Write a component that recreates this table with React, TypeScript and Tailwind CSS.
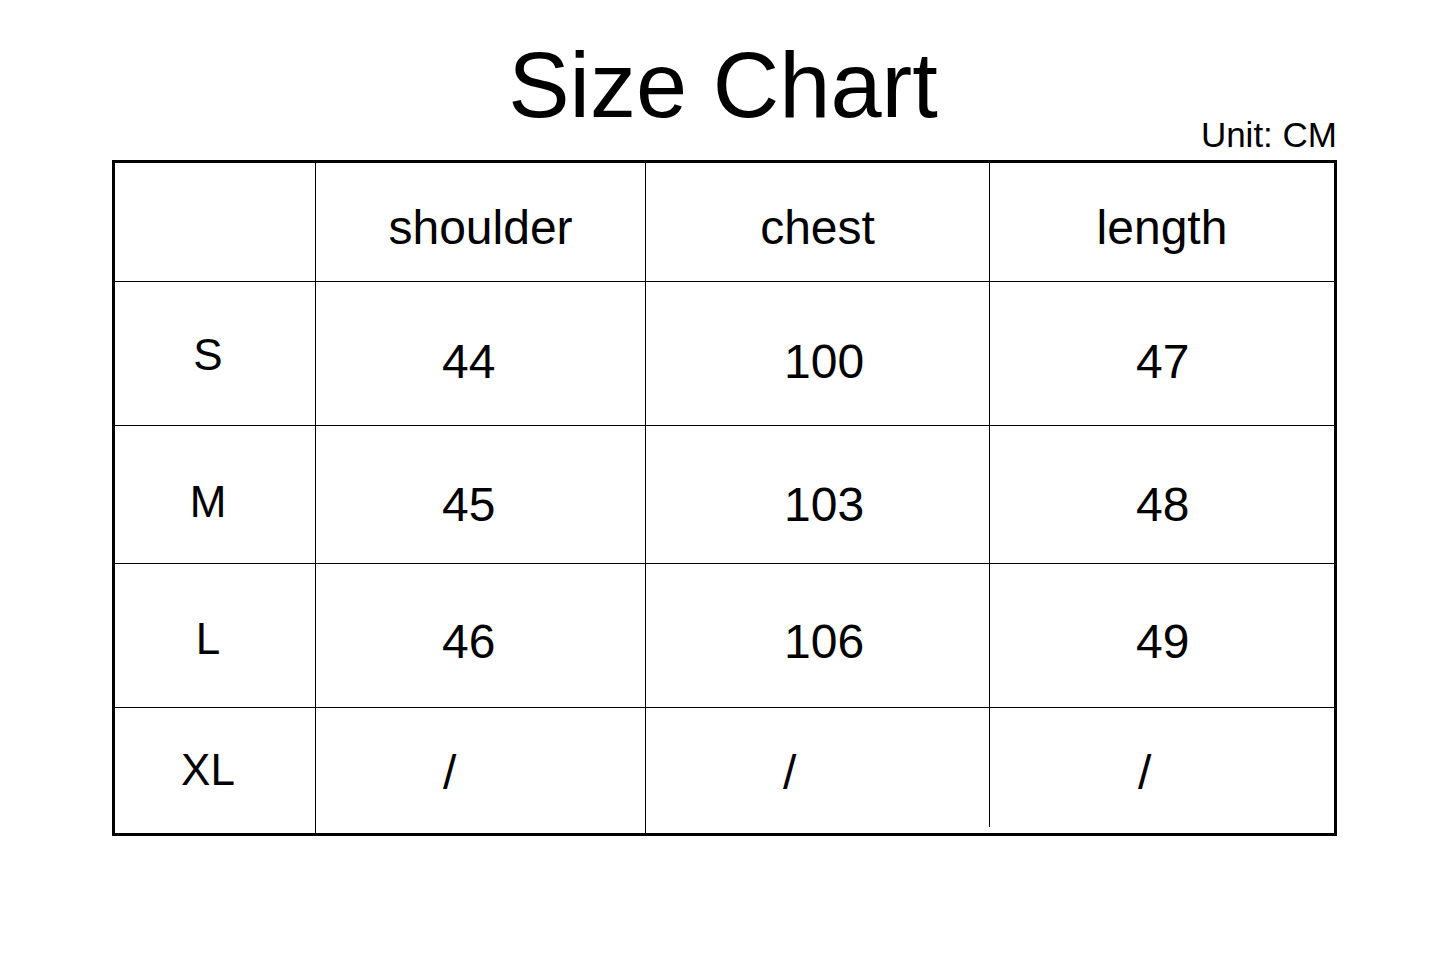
import React from 'react';

const HEADERS = ['shoulder', 'chest', 'length'];

// label padding-top, value padding-top per row (measured from the chart)
const ROWS = [
  { size: 'S', values: ['44', '100', '47'], labelPt: 'pt-[51px]', valuePt: 'pt-[56px]' },
  { size: 'M', values: ['45', '103', '48'], labelPt: 'pt-[54px]', valuePt: 'pt-[55px]' },
  { size: 'L', values: ['46', '106', '49'], labelPt: 'pt-[53px]', valuePt: 'pt-[54px]' },
  { size: 'XL', values: ['/', '/', '/'], labelPt: 'pt-[40px]', valuePt: 'pt-[41px]' },
];

const VALUE_PL = ['pl-[126px]', 'pl-[138px]', 'pl-[146px]'];
const SLASH_PL = ['pl-[127px]', 'pl-[137px]', 'pl-[148px]'];

const App = () => {
  return (
    <div className="w-[1440px] h-[968px] bg-white text-black font-['Liberation_Sans',Arial,sans-serif]">
      {/* Title */}
      <div className="pt-[39px] pl-[6px] text-center text-[92px] leading-none">Size Chart</div>

      <div className="ml-[112px] w-[1225px]">
        <div className="-mt-[14px] text-right text-[35px] leading-none">Unit: CM</div>

        {/* Table */}
        <div className="mt-[8px] border-[3px] border-black grid grid-cols-[200px_330px_344px_345px] grid-rows-[118px_144px_138px_144px_126px]">
          <div />
          {HEADERS.map(h => (
            <div key={h} className="border-l border-black pt-[41px] text-center text-[48px] leading-none">
              {h}
            </div>
          ))}

          {ROWS.map((row, r) => {
            const last = r === ROWS.length - 1;
            return (
              <React.Fragment key={row.size}>
                <div className={`border-t border-black pr-[14px] text-center text-[44px] leading-none ${row.labelPt}`}>
                  {row.size}
                </div>
                {row.values.map((v, c) => {
                  const pl = v === '/' ? SLASH_PL[c] : VALUE_PL[c];
                  if (last && c === 2) {
                    // the last column divider stops just short of the bottom border
                    return (
                      <div key={c} className="border-t border-black flex">
                        <div className="w-px h-[119px] bg-black shrink-0" />
                        <div className={`text-[48px] leading-none ${row.valuePt} ${pl}`}>{v}</div>
                      </div>
                    );
                  }
                  return (
                    <div key={c} className={`border-t border-l border-black text-[48px] leading-none ${row.valuePt} ${pl}`}>
                      {v}
                    </div>
                  );
                })}
              </React.Fragment>
            );
          })}
        </div>
      </div>
    </div>
  );
};

export default App;
